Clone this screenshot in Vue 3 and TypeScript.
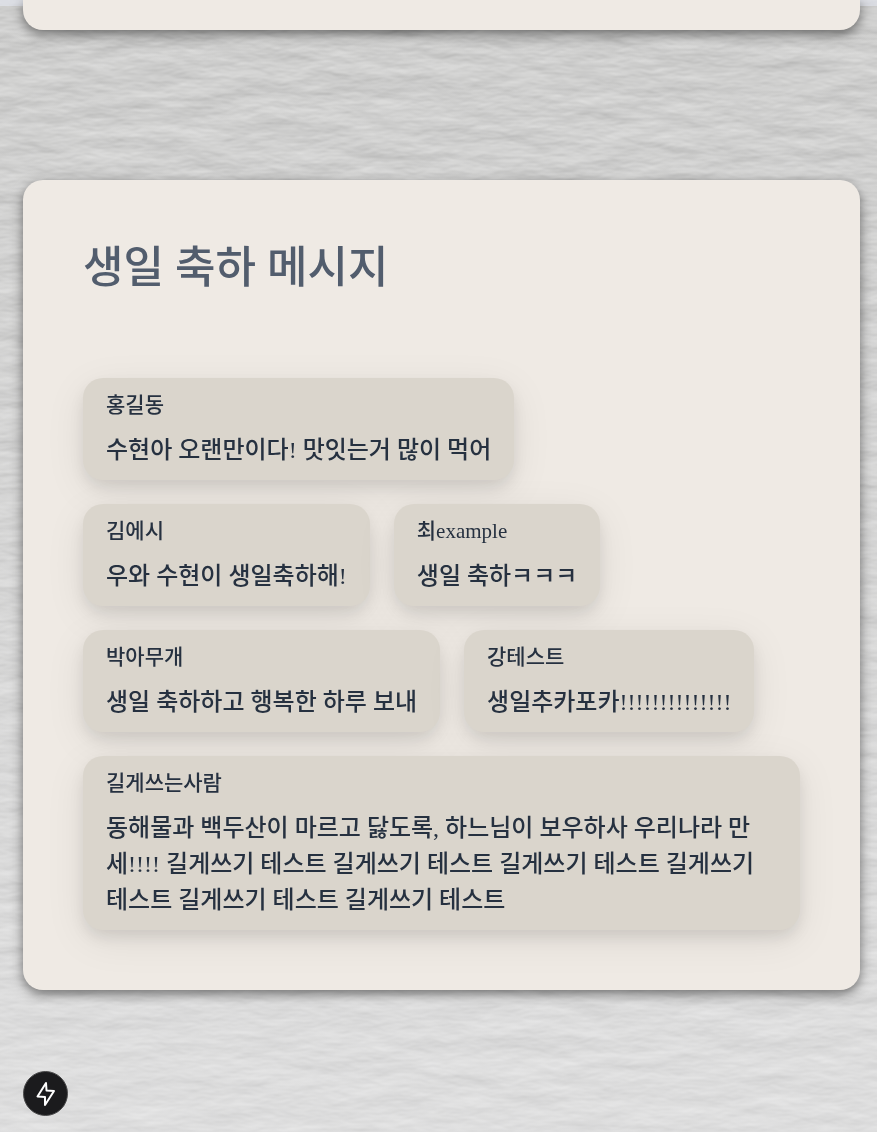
<script setup lang="ts">
interface Message {
  name: string
  text: string
}

const messages: Message[] = [
  { name: '홍길동', text: '수현아 오랜만이다! 맛잇는거 많이 먹어' },
  { name: '김에시', text: '우와 수현이 생일축하해!' },
  { name: '최example', text: '생일 축하ㅋㅋㅋ' },
  { name: '박아무개', text: '생일 축하하고 행복한 하루 보내' },
  { name: '강테스트', text: '생일추카포카!!!!!!!!!!!!!!' },
  {
    name: '길게쓰는사람',
    text: '동해물과 백두산이 마르고 닳도록, 하느님이 보우하사 우리나라 만세!!!! 길게쓰기 테스트 길게쓰기 테스트 길게쓰기 테스트 길게쓰기 테스트 길게쓰기 테스트 길게쓰기 테스트',
  },
]
</script>

<template>
  <div class="page">
    <svg class="paper" aria-hidden="true">
      <defs>
        <filter id="fibre" x="0" y="0" width="100%" height="100%" color-interpolation-filters="sRGB">
          <feTurbulence type="fractalNoise" baseFrequency="0.016 0.045" numOctaves="4" seed="8" result="noise" />
          <feDiffuseLighting in="noise" surfaceScale="0.9" diffuseConstant="1" lighting-color="#ededec">
            <feDistantLight azimuth="90" elevation="60" />
          </feDiffuseLighting>
        </filter>
        <linearGradient id="tone" x1="0" y1="0" x2="0" y2="1">
          <stop offset="0" stop-color="#f6f6f8" stop-opacity="0" />
          <stop offset="1" stop-color="#f6f6f8" stop-opacity="0.4" />
        </linearGradient>
      </defs>
      <rect width="100%" height="100%" filter="url(#fibre)" />
      <rect width="100%" height="100%" fill="url(#tone)" />
      <rect width="100%" height="6" fill="#e2e6ee" fill-opacity="0.7" />
    </svg>

    <section class="panel panel-previous"></section>

    <section class="panel" aria-labelledby="messages-title">
      <h2 id="messages-title" class="title">생일 축하 메시지</h2>
      <ul class="messages">
        <li v-for="message in messages" :key="message.name" class="message">
          <p class="name">{{ message.name }}</p>
          <p class="text">{{ message.text }}</p>
        </li>
      </ul>
    </section>

    <button class="tools" type="button" aria-label="개발 도구">
      <svg width="23" height="27" viewBox="0 0 23 27" fill="none" stroke="#fff" stroke-width="2" aria-hidden="true">
        <path d="M12 3 L3.5 16.5 L11 17 V25 L20 11 L12.5 10.5 Z" stroke-linejoin="round" />
      </svg>
    </button>
  </div>
</template>

<style>
body {
  margin: 0;
  background: #d0d1d1;
}
</style>

<style scoped>
.page {
  position: relative;
  isolation: isolate;
  display: flex;
  flex-direction: column;
  gap: 150px;
  min-height: 100vh;
  box-sizing: border-box;
  padding: 0 17px 0 23px;
  color: #263140;
  font-family: "Liberation Serif", "Noto Sans CJK KR", serif;
  font-weight: 500;
}

.paper {
  position: fixed;
  inset: 0;
  z-index: -1;
  width: 100%;
  height: 100%;
}

.panel {
  box-sizing: border-box;
  padding: 60px;
  border-radius: 20px;
  background: #efeae4;
  box-shadow: 0 4px 12px rgba(0, 0, 0, 0.5);
}

.panel-previous {
  padding: 30px 0 0;
  border-radius: 0 0 20px 20px;
}

.title {
  margin: 0 0 80px;
  color: #525d6d;
  font-size: 44px;
  font-weight: 500;
  line-height: 58px;
}

.messages {
  display: flex;
  flex-wrap: wrap;
  gap: 24px;
  margin: 0;
  padding: 0;
  list-style: none;
}

.message {
  position: relative;
  box-sizing: border-box;
  max-width: 100%;
  padding: 12px 23px;
  border-radius: 20px;
  background: #dad5cc;
  box-shadow:
    0 10px 40px rgba(0, 0, 0, 0.08),
    0 8px 16px -2px rgba(0, 0, 0, 0.1);
}

.name,
.text {
  margin: 0;
}

.name {
  margin-bottom: 12px;
  font-size: 21px;
  line-height: 30px;
}

.text {
  font-size: 24px;
  line-height: 36px;
}

.tools {
  position: fixed;
  bottom: 16px;
  left: 23px;
  display: grid;
  place-items: center;
  width: 45px;
  height: 45px;
  padding: 0;
  border: 1px solid #4a4a4b;
  border-radius: 50%;
  background: #1b1b1d;
  cursor: pointer;
}
</style>
